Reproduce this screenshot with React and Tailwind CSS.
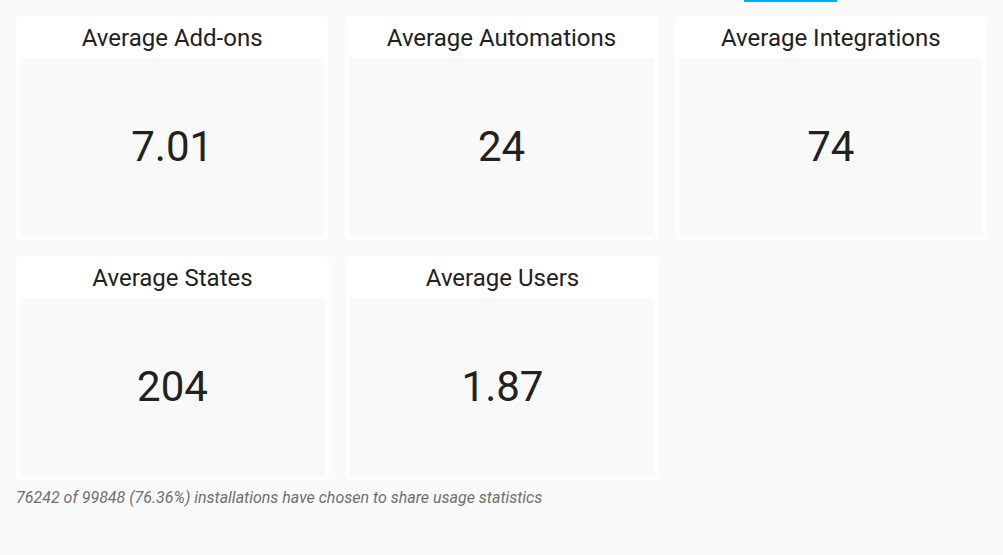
import React from "react";

const rows = [
  [
    { title: "Average Add-ons", value: "7.01" },
    { title: "Average Automations", value: "24" },
    { title: "Average Integrations", value: "74" },
  ],
  [
    { title: "Average States", value: "204" },
    { title: "Average Users", value: "1.87" },
  ],
];

function Card({ title, value }) {
  return (
    <div className="w-[313px] h-[224px] bg-white rounded-[5px] p-[4px] pt-0 flex flex-col">
      <div className="h-[42px] flex items-center justify-center text-[24px] text-[#212121] leading-none pt-[1px]">
        {title}
      </div>
      <div className="flex-1 bg-[#f9f9f9] flex items-center justify-center text-[42px] text-[#212121] leading-none pb-[1px]">
        {value}
      </div>
    </div>
  );
}

export default function App() {
  return (
    <div className="w-[1003px] h-[555px] bg-[#fafafa] overflow-hidden" style={{ fontFamily: "Roboto, 'Noto Sans', sans-serif" }}>
      <div className="h-[2px] pl-[744px]">
        <div className="w-[93px] h-[2px] bg-[#03a9f4]" />
      </div>
      <div className="px-[16px] pt-[14px] flex flex-col gap-[16px]">
        {rows.map((row, i) => (
          <div key={i} className="flex gap-[17px]">
            {row.map((c) => (
              <Card key={c.title} {...c} />
            ))}
          </div>
        ))}
      </div>
      <div className="px-[16px] pt-[8px] text-[16px] italic text-[#6f6f6f] leading-[20px]">
        76242 of 99848 (76.36%) installations have chosen to share usage statistics
      </div>
    </div>
  );
}
